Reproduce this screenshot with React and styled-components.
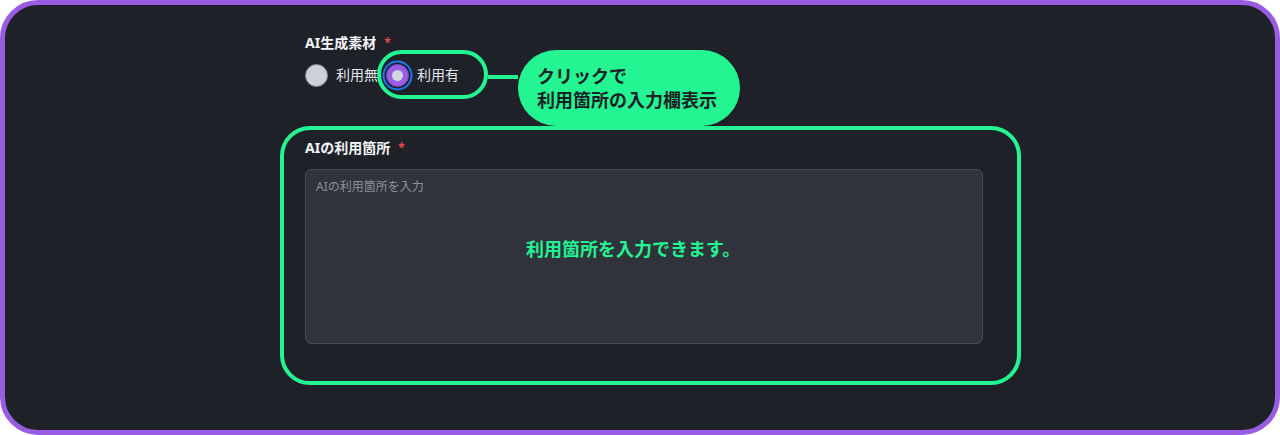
import React from "react";
import styled, { createGlobalStyle } from "styled-components";

const GlobalStyle = createGlobalStyle`
  html, body {
    margin: 0;
    padding: 0;
    background: #ffffff;
  }
  body {
    font-family: "Noto Sans", "Noto Sans CJK JP", sans-serif;
  }
`;

const GREEN = "#22f592";
const PURPLE = "#9a5ce2";

const Frame = styled.div`
  position: relative;
  box-sizing: border-box;
  width: 1280px;
  height: 435px;
  border: 5px solid ${PURPLE};
  border-radius: 38px;
  background: #1f2129;
  padding: 28px 0 0 275px;
  overflow: hidden;
`;

const Field = styled.div`
  display: flex;
  flex-direction: column;
  margin-left: 25px;
`;

const Label = styled.div`
  display: flex;
  align-items: flex-start;
  gap: 8px;
  height: 20px;
  line-height: 20px;
  font-size: 14px;
  font-weight: 700;
  color: #f3f4f6;
`;

const Required = styled.span`
  color: #e5484d;
  font-size: 12px;
  line-height: 14px;
  margin-top: 3px;
`;

const RadioRow = styled.div`
  display: flex;
  align-items: center;
  gap: 8px;
  margin-top: 10px;
  height: 24px;
`;

const Option = styled.label`
  display: flex;
  align-items: center;
  gap: 8px;
  font-size: 14px;
  color: #e4e6ea;
  line-height: 24px;
`;

const Circle = styled.span`
  position: relative;
  box-sizing: border-box;
  width: 23px;
  height: 23px;
  border-radius: 50%;
  background: ${(p) => (p.checked ? "#9b5de5" : "#cbd0da")};
  border: 1px solid ${(p) => (p.checked ? "#7a45c0" : "#7d8290")};
  box-shadow: ${(p) =>
    p.checked ? "0 0 0 1.5px #1f2129, 0 0 0 3.5px #1a78f0" : "none"};
  &::after {
    content: "";
    display: ${(p) => (p.checked ? "block" : "none")};
    position: absolute;
    left: 50%;
    top: 50%;
    width: 11px;
    height: 11px;
    margin: -5.5px 0 0 -5.5px;
    border-radius: 50%;
    background: #d3d6de;
  }
`;

const UsageBox = styled.div`
  box-sizing: border-box;
  width: 741px;
  margin-top: 39px;
  border: 4px solid ${GREEN};
  border-radius: 30px;
  padding: 8px 34px 37px 21px;
  display: flex;
  flex-direction: column;
  gap: 11px;
`;

const TextareaWrap = styled.div`
  position: relative;
  width: 678px;
  height: 175px;
`;

const TextArea = styled.textarea`
  box-sizing: border-box;
  width: 100%;
  height: 100%;
  resize: none;
  background: #30333c;
  border: 1px solid #464951;
  border-radius: 6px;
  padding: 8px 10px;
  font-family: "Noto Sans", "Noto Sans CJK JP", sans-serif;
  font-size: 12px;
  line-height: 17px;
  color: #e4e6ea;
  outline: none;
  &::placeholder {
    color: #8f929a;
  }
`;

const Hint = styled.div`
  position: absolute;
  left: 221px;
  top: 67px;
  font-size: 18px;
  font-weight: 700;
  line-height: 26px;
  color: ${GREEN};
  white-space: nowrap;
  pointer-events: none;
`;

const Annotation = styled.div`
  position: absolute;
  left: 372px;
  top: 45px;
  display: flex;
  align-items: flex-start;
`;

const Ring = styled.div`
  box-sizing: border-box;
  width: 111px;
  height: 49px;
  border: 4px solid ${GREEN};
  border-radius: 25px;
`;

const Connector = styled.div`
  width: 30px;
  height: 4px;
  margin-top: 25px;
  background: ${GREEN};
`;

const Callout = styled.div`
  box-sizing: border-box;
  width: 222px;
  height: 76px;
  border-radius: 38px;
  background: ${GREEN};
  padding: 0 0 0 19px;
  display: flex;
  flex-direction: column;
  justify-content: center;
  font-size: 18px;
  font-weight: 700;
  line-height: 24px;
  color: #1b1e25;
  white-space: nowrap;
`;

export default function App() {
  return (
    <>
      <GlobalStyle />
      <Frame>
        <Field>
          <Label>
            AI生成素材<Required>*</Required>
          </Label>
          <RadioRow>
            <Option>
              <Circle />
              利用無
            </Option>
            <Option>
              <Circle checked />
              利用有
            </Option>
          </RadioRow>
        </Field>

        <UsageBox>
          <Label>
            AIの利用箇所<Required>*</Required>
          </Label>
          <TextareaWrap>
            <TextArea placeholder="AIの利用箇所を入力" />
            <Hint>利用箇所を入力できます。</Hint>
          </TextareaWrap>
        </UsageBox>

        <Annotation>
          <Ring />
          <Connector />
          <Callout>
            <span>クリックで</span>
            <span>利用箇所の入力欄表示</span>
          </Callout>
        </Annotation>
      </Frame>
    </>
  );
}
